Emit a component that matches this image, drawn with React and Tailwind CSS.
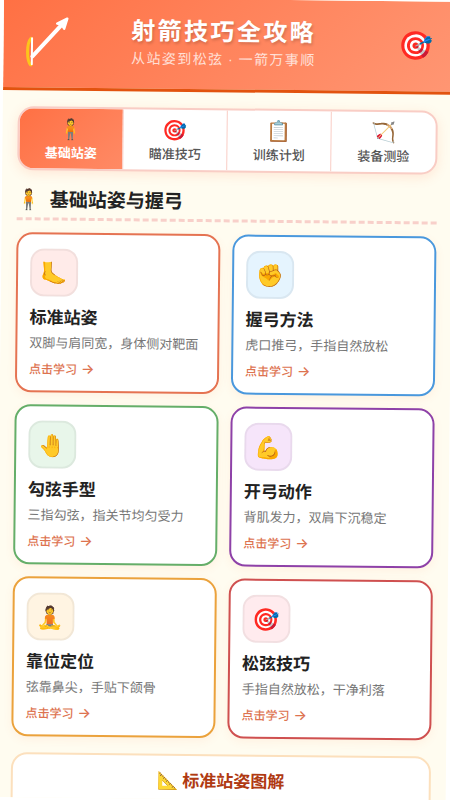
import React, { useState } from 'react';

const tabs = [
  { id: 'stance', icon: '🧍', label: '基础站姿' },
  { id: 'aim', icon: '🎯', label: '瞄准技巧' },
  { id: 'plan', icon: '📋', label: '训练计划' },
  { id: 'gear', icon: '🏹', label: '装备测验' },
];

const lessons = [
  { icon: '🦶', title: '标准站姿', desc: '双脚与肩同宽，身体侧对靶面', border: 'border-[#e57352]', tint: 'bg-[#ffebe9]' },
  { icon: '✊', title: '握弓方法', desc: '虎口推弓，手指自然放松', border: 'border-[#4a98dd]', tint: 'bg-[#e5f4fe]' },
  { icon: '🤚', title: '勾弦手型', desc: '三指勾弦，指关节均匀受力', border: 'border-[#65ae69]', tint: 'bg-[#e8f6ea]' },
  { icon: '💪', title: '开弓动作', desc: '背肌发力，双肩下沉稳定', border: 'border-[#8e41a8]', tint: 'bg-[#f6e5fa]' },
  { icon: '🧘', title: '靠位定位', desc: '弦靠鼻尖，手贴下颌骨', border: 'border-[#eba23c]', tint: 'bg-[#fff4e2]' },
  { icon: '🎯', title: '松弦技巧', desc: '手指自然放松，干净利落', border: 'border-[#cf5050]', tint: 'bg-[#ffebee]' },
];

const BowArrow = () => (
  <svg viewBox="0 0 48 54" className="h-[54px] w-12 shrink-0" fill="none" aria-hidden="true">
    <path d="M7.500 26 C3 31 3 48 7.500 53" stroke="#fcc41c" strokeWidth="3" strokeLinecap="round" />
    <path d="M8.500 26 L8.500 52" stroke="#fff" strokeWidth="2" strokeLinecap="round" />
    <path d="M9 44 L40 10" stroke="#fff" strokeWidth="4" strokeLinecap="round" />
    <path d="M43.500 6 L33.500 11 L38 12 L40.500 16 Z" fill="#fff" stroke="#fff" strokeWidth="2.500" strokeLinejoin="round" />
  </svg>
);

const LessonCard = ({ lesson }) => (
  <article className={`rounded-2xl border-2 bg-white px-3 py-3.5 shadow-[0_3px_10px_rgba(255,112,67,0.08)] ${lesson.border}`}>
    <div className={`flex h-12 w-12 items-center justify-center rounded-[14px] border-2 border-black/5 pb-0.5 text-[22px] leading-none ${lesson.tint}`}>
      {lesson.icon}
    </div>
    <h3 className="mt-2 text-[17px] leading-6 font-bold text-[#222]">{lesson.title}</h3>
    <p className="mt-1 text-[13px] leading-5 text-[#777]">{lesson.desc}</p>
    <a href="#lesson" className="mt-2 flex gap-1 text-xs leading-4 font-medium text-[#dd7350]">
      点击学习 <span className="font-[Inter] text-sm leading-4">→</span>
    </a>
  </article>
);

const App = () => {
  const [active, setActive] = useState('stance');

  return (
    <div className="h-screen overflow-hidden bg-white font-['Noto_Sans_CJK_SC','Noto_Color_Emoji',sans-serif]">
      {/* the whole sheet leans slightly to the right */}
      <div className="h-screen origin-top-left translate-x-1 -translate-y-[3px] rotate-[0.6deg] overflow-hidden bg-[#fffcf0]">
        <header className="flex items-start border-b-[3px] border-[#e2530f] bg-linear-135 from-[#ff7043] to-[#ff9673] px-5 pt-[15px] pb-5">
          <BowArrow />
          <div className="flex-1 text-center text-white">
            <h1 className="text-2xl leading-8 font-bold tracking-widest whitespace-nowrap text-shadow-[1px_2px_3px_rgba(0,0,0,0.18)]">射箭技巧全攻略</h1>
            <p className="mt-0.5 text-sm leading-5 tracking-widest whitespace-nowrap text-white/75">
              从站姿到松弦 <span className="font-['Liberation_Sans']">·</span> 一箭万事顺
            </p>
          </div>
          <div className="flex h-[54px] w-[58px] shrink-0 items-center justify-end text-[28px] leading-none">🎯</div>
        </header>

        <main className="px-[15px] pt-4">
          <nav className="grid grid-cols-4 overflow-hidden rounded-2xl border-2 border-[#f9cdc5] bg-white shadow-[0_3px_12px_rgba(255,112,67,0.15)]">
            {tabs.map(tab => (
              <button
                key={tab.id}
                type="button"
                onClick={() => setActive(tab.id)}
                className={`flex flex-col items-center border-r border-[#f9cdc5] py-1.5 last:border-r-0 ${
                  active === tab.id ? 'bg-linear-135 from-[#ff7043] to-[#ff8a65] font-bold text-white' : 'font-medium text-[#555]'
                }`}
              >
                <span className="text-xl leading-7">{tab.icon}</span>
                <span className="text-[13px] leading-5">{tab.label}</span>
              </button>
            ))}
          </nav>

          <h2 className="mt-3 flex items-center gap-2 border-b-[3px] border-dashed border-[#f8d0ca] pb-[3px] text-[19px] leading-8 font-bold text-[#222]">
            <span className="text-xl leading-8">🧍</span>
            基础站姿与握弓
          </h2>

          <section className="mt-3 grid grid-cols-2 gap-3">
            {lessons.map(lesson => (
              <LessonCard key={lesson.title} lesson={lesson} />
            ))}
          </section>

          <section className="mt-4 rounded-2xl border-2 border-[#fce0bd] bg-white px-4 pt-3 pb-10">
            <h3 className="text-center text-[17px] leading-6 font-bold text-[#b03a12]">📐 标准站姿图解</h3>
          </section>
        </main>
      </div>
    </div>
  );
};

export default App;
